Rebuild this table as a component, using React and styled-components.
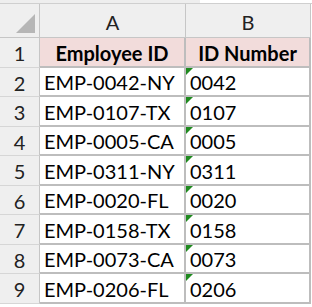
import React from 'react'
import styled, { createGlobalStyle } from 'styled-components'

const GlobalStyle = createGlobalStyle`
  html, body {
    margin: 0;
    padding: 0;
    background: #ffffff;
  }
  body {
    font-family: Lato, "Open Sans", sans-serif;
  }
`

const rows = [
  ['EMP-0042-NY', '0042'],
  ['EMP-0107-TX', '0107'],
  ['EMP-0005-CA', '0005'],
  ['EMP-0311-NY', '0311'],
  ['EMP-0020-FL', '0020'],
  ['EMP-0158-TX', '0158'],
  ['EMP-0073-CA', '0073'],
  ['EMP-0206-FL', '0206'],
]

const Sheet = styled.div`
  width: 312px;
  height: 307px;
  overflow: hidden;
  background: #ffffff;
`

const TopStrip = styled.div`
  display: flex;
  height: 3px;
  border-bottom: 1px solid #cfcfcf;
`

const StripPart = styled.div`
  width: ${p => p.$w};
  background: ${p => p.$bg};
`

const Grid = styled.div`
  display: grid;
  grid-template-columns: 40px 146px 125px;
  grid-template-rows: 34px repeat(9, 29.5px);
`

const Corner = styled.div`
  position: relative;
  background: #efefef;
  border-right: 1px solid #c6c6c6;
  border-bottom: 1px solid #c6c6c6;
  box-sizing: border-box;
`

const CornerMark = styled.div`
  position: absolute;
  right: 4px;
  bottom: 4px;
  width: 0;
  height: 0;
  border-left: 19px solid transparent;
  border-bottom: 19px solid #b6b6b6;
`

const ColHead = styled.div`
  background: #efefef;
  border-right: 1px solid #c6c6c6;
  border-bottom: 1px solid #c6c6c6;
  box-sizing: border-box;
  display: flex;
  align-items: center;
  justify-content: center;
  font-size: 20px;
  color: #222222;
  padding-top: 2px;
`

const RowHead = styled.div`
  background: #efefef;
  border-right: 1px solid #c6c6c6;
  border-bottom: 1px solid #d6d6d6;
  box-sizing: border-box;
  display: flex;
  align-items: center;
  justify-content: center;
  font-size: 20px;
  color: #222222;
  padding-top: 2px;
`

const Cell = styled.div`
  position: relative;
  background: ${p => (p.$header ? '#f2dcdb' : '#ffffff')};
  border-right: 2px solid #bdbdbd;
  border-bottom: 2px solid #bdbdbd;
  box-sizing: border-box;
  display: flex;
  align-items: center;
  justify-content: ${p => (p.$header ? 'center' : 'flex-start')};
  padding: 2px 0 0 ${p => (p.$header ? '0' : '4px')};
  font-size: 20px;
  font-weight: ${p => (p.$header ? 700 : 400)};
  color: #000000;
  white-space: nowrap;
`

const Flag = styled.span`
  position: absolute;
  left: 0;
  top: 0;
  width: 0;
  height: 0;
  border-top: 7px solid #1f8a1f;
  border-right: 7px solid transparent;
`

const App = () => {
  return (
    <Sheet>
      <GlobalStyle />
      <TopStrip>
        <StripPart $w="200px" $bg="#eeeeee" />
        <StripPart $w="112px" $bg="#ffffff" />
      </TopStrip>
      <Grid>
        <Corner>
          <CornerMark />
        </Corner>
        <ColHead>A</ColHead>
        <ColHead>B</ColHead>

        <RowHead>1</RowHead>
        <Cell $header>Employee ID</Cell>
        <Cell $header>ID Number</Cell>

        {rows.map(([id, num], i) => (
          <React.Fragment key={id}>
            <RowHead>{i + 2}</RowHead>
            <Cell>{id}</Cell>
            <Cell>
              <Flag />
              {num}
            </Cell>
          </React.Fragment>
        ))}
      </Grid>
    </Sheet>
  )
}

export default App
